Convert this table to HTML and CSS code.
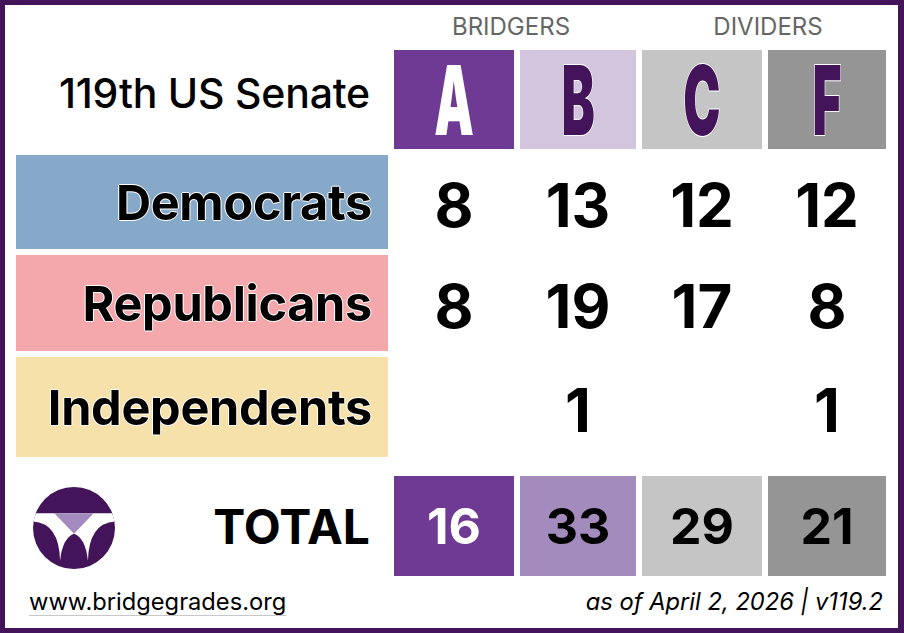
FILE: index.html
```html
<!DOCTYPE html>
<html lang="en">
<head>
<meta charset="utf-8">
<title>119th US Senate – Bridge Grades</title>
<link rel="stylesheet" href="styles.css">
</head>
<body>
<div class="frame">
  <div class="board">
    <div class="group g-bridgers">BRIDGERS</div>
    <div class="group g-dividers">DIVIDERS</div>

    <div class="title">119th US Senate</div>
    <div class="grade grade-a"><span class="letter">A</span></div>
    <div class="grade grade-b"><span class="letter">B</span></div>
    <div class="grade grade-c"><span class="letter">C</span></div>
    <div class="grade grade-f"><span class="letter">F</span></div>

    <div class="party dem">Democrats</div>
    <div class="num">8</div>
    <div class="num">13</div>
    <div class="num">12</div>
    <div class="num">12</div>

    <div class="party rep">Republicans</div>
    <div class="num">8</div>
    <div class="num">19</div>
    <div class="num">17</div>
    <div class="num">8</div>

    <div class="party ind">Independents</div>
    <div class="num"></div>
    <div class="num">1</div>
    <div class="num"></div>
    <div class="num">1</div>

    <div class="total-label">
      <svg class="logo" viewBox="0 0 100 100" width="82" height="82" aria-hidden="true">
        <defs>
          <clipPath id="circ"><circle cx="50" cy="50" r="50"/></clipPath>
        </defs>
        <circle cx="50" cy="50" r="50" fill="#43145a"/>
        <g clip-path="url(#circ)">
          <path fill="#ffffff" d="M0 32 L100 32 L100 42 Q68 44 67 90 Q64 62 50 57 Q36 62 33 90 Q32 44 0 42 Z"/>
          <polygon fill="#a48bbf" points="26,32 74,32 50,57"/>
        </g>
      </svg>
      <span class="total-text">TOTAL</span>
    </div>
    <div class="tot tot-a">16</div>
    <div class="tot tot-b">33</div>
    <div class="tot tot-c">29</div>
    <div class="tot tot-f">21</div>
  </div>
  <div class="footer">
    <span class="site">www.bridgegrades.org</span>
    <span class="asof">as of April 2, 2026 | v119.2</span>
  </div>
</div>
</body>
</html>
```
FILE: styles.css
```css
html, body {
  margin: 0;
  padding: 0;
  background: #ffffff;
}

.frame {
  width: 904px;
  height: 633px;
  box-sizing: border-box;
  border: 5px solid #43145a;
  border-right-width: 6px;
  background: #ffffff;
  font-family: "Inter", "Liberation Sans", sans-serif;
  color: #000000;
  overflow: hidden;
}

.board {
  display: grid;
  grid-template-columns: 372px 120px 116px 120px 118px;
  grid-template-rows: 39px 99px 94px 96px 100px 113px;
  column-gap: 6px;
  row-gap: 6px;
  padding-left: 11px;
}

.group {
  font-size: 24px;
  line-height: 28px;
  color: #666666;
  text-align: center;
  padding-top: 8px;
}
.g-bridgers { grid-column: 2 / 4; padding-right: 8px; }
.g-dividers { grid-column: 4 / 6; padding-left: 8px; }

.title {
  grid-column: 1;
  grid-row: 2;
  display: flex;
  align-items: center;
  justify-content: flex-end;
  padding-right: 18px;
  padding-bottom: 14px;
  font-size: 41px;
  font-weight: 500;
  letter-spacing: -0.2px;
}

.grade {
  display: flex;
  align-items: center;
  justify-content: center;
}
.grade-a { background: #6f3a94; }
.grade-b { background: #d3c5de; }
.grade-c { background: #c5c5c5; }
.grade-f { background: #959595; }

.letter {
  display: inline-block;
  font-size: 96px;
  line-height: 96px;
  font-weight: 900;
  transform: scaleX(0.52);
  color: #43145a;
  -webkit-text-stroke: 2px #ffffff;
  paint-order: stroke fill;
}
.grade-a .letter {
  color: #ffffff;
  -webkit-text-stroke: 0;
}

.party {
  display: flex;
  align-items: center;
  justify-content: flex-end;
  padding-right: 16px;
  font-size: 48.6px;
  font-weight: 700;
  letter-spacing: -0.3px;
  text-shadow: -1px 0 #ffffff, 1px 0 #ffffff, 0 -1px #ffffff, 0 1px #ffffff;
}
.dem { background: #87a9c9; }
.rep { background: #f4a8ac; }
.ind { background: #f7e1ab; }

.num {
  display: flex;
  align-items: center;
  justify-content: center;
  padding-top: 5px;
  font-size: 60px;
  font-weight: 700;
}

.total-label {
  margin-top: 13px;
  display: flex;
  align-items: center;
  justify-content: space-between;
  padding-left: 17px;
  padding-right: 18px;
}
.logo { display: block; margin-top: 4px; }
.total-text {
  font-size: 48px;
  font-weight: 700;
}

.tot {
  margin-top: 13px;
  display: flex;
  align-items: center;
  justify-content: center;
  font-size: 50px;
  font-weight: 700;
}
.tot-a { background: #6f3a94; color: #ffffff; }
.tot-b { background: #a48bbd; }
.tot-c { background: #c5c5c5; }
.tot-f { background: #959595; }

.footer {
  display: flex;
  justify-content: space-between;
  align-items: baseline;
  margin-top: 12px;
  padding-left: 24px;
  padding-right: 15px;
  font-size: 23.7px;
  line-height: 28px;
}
.site {
  text-decoration: underline;
  text-decoration-color: #c8c8c8;
  text-decoration-thickness: 1px;
  text-underline-offset: 5px;
}
.asof {
  font-style: italic;
}
```
